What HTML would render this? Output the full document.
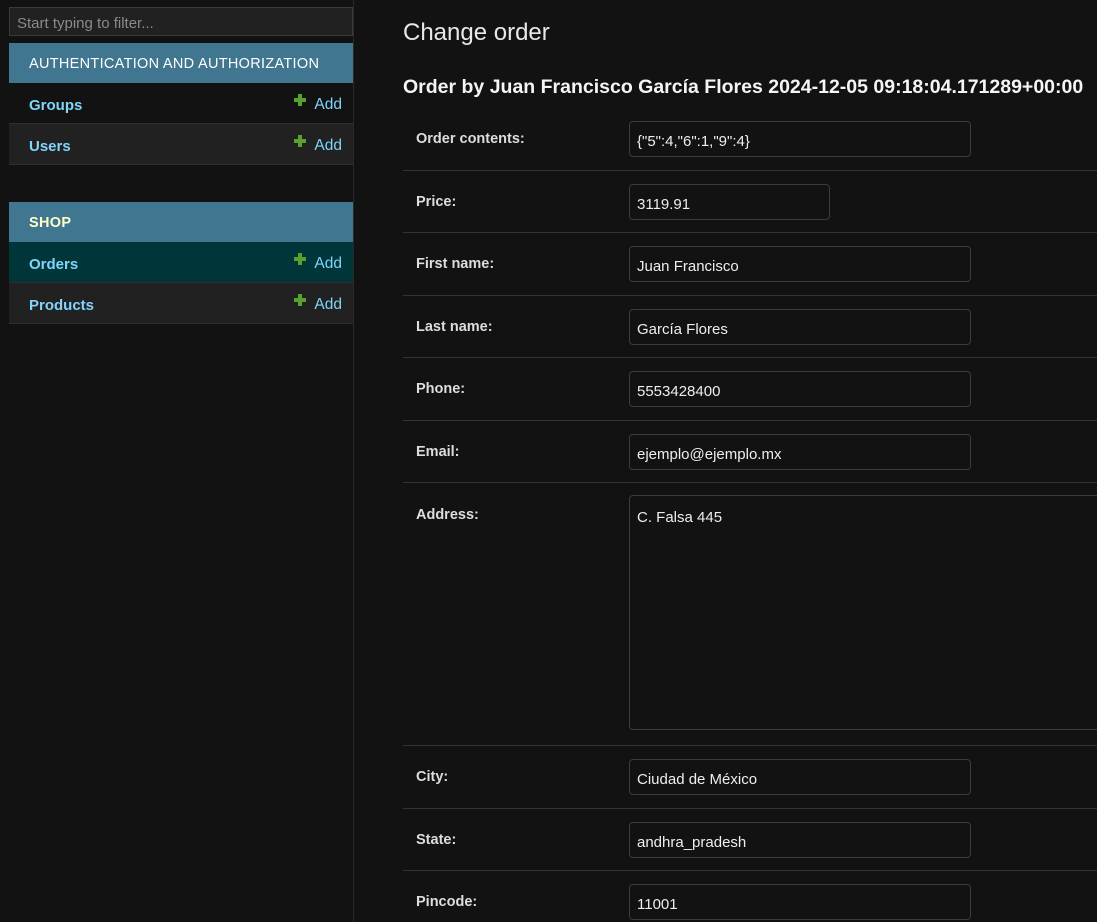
<!DOCTYPE html>
<html><head><meta charset="utf-8"><style>
*{box-sizing:border-box;margin:0;padding:0}
html,body{width:1097px;height:922px;overflow:hidden}
body{background:#121212;font-family:"Liberation Sans",sans-serif;color:#eee;position:relative}
#side{position:absolute;left:0;top:0;width:354px;height:922px;border-right:1px solid #2a2a2a;background:#121212}
.filter{position:absolute;left:9px;top:7px;width:344px;height:29px;border:1px solid #3a3a3a;background:#212121;color:#8a8a8a;font-size:15px;padding:7px 7px}
.cap{position:absolute;left:9px;width:344px;height:40px;background:#417690;color:#fff;font-size:14.5px;padding:13px 20px;letter-spacing:.3px}
.cap.b{font-weight:bold;color:#ffffcc}
.row{position:absolute;left:9px;width:344px;height:41px;border-bottom:1px solid #2e2e2e;font-size:15px;font-weight:bold;color:#81d4fa;padding:14px 20px}
.row .add{position:absolute;right:11px;top:13px;font-weight:normal;color:#81d4fa;font-size:15.5px}
.row .add i{position:absolute;left:-20px;top:-2px;width:12px;height:12px}
.row .add i:before{content:"";position:absolute;left:4px;top:0;width:4px;height:12px;background:#5aa02c}
.row .add i:after{content:"";position:absolute;left:0;top:4px;width:12px;height:4px;background:#5aa02c}
h1{position:absolute;left:403px;top:19px;font-size:24px;font-weight:300;color:#e8e8e8}
h2{position:absolute;left:403px;top:76px;font-size:19.5px;font-weight:bold;color:#f5f5f5;white-space:nowrap}
.f{position:absolute;left:403px;width:694px;border-bottom:1px solid #333}
.f label{position:absolute;left:13px;top:23px;font-size:14.5px;font-weight:bold;color:#ddd}
.f .in{position:absolute;left:226px;top:13px;width:342px;height:36px;border:1px solid #3c3c3c;border-radius:4px;background:#121212;font-size:15px;color:#eee;padding:11px 7px 0}
</style></head><body>
<div id="side">
<div class="filter">Start typing to filter...</div>
<div class="cap" style="top:43px">AUTHENTICATION AND AUTHORIZATION</div>
<div class="row" style="top:83px;background:#121212">Groups<span class="add"><i></i>Add</span></div>
<div class="row" style="top:124px;background:#212121">Users<span class="add"><i></i>Add</span></div>
<div class="cap b" style="top:202px">SHOP</div>
<div class="row" style="top:242px;background:#00363a">Orders<span class="add"><i></i>Add</span></div>
<div class="row" style="top:283px;background:#212121">Products<span class="add"><i></i>Add</span></div>
</div>
<h1>Change order</h1>
<h2>Order by Juan Francisco García Flores 2024-12-05 09:18:04.171289+00:00</h2>
<div class="f" style="top:108px;height:63px"><label>Order contents:</label><div class="in">{"5":4,"6":1,"9":4}</div></div>
<div class="f" style="top:171px;height:62px"><label>Price:</label><div class="in" style="width:201px">3119.91</div></div>
<div class="f" style="top:233px;height:63px"><label>First name:</label><div class="in">Juan Francisco</div></div>
<div class="f" style="top:296px;height:62px"><label>Last name:</label><div class="in">García Flores</div></div>
<div class="f" style="top:358px;height:63px"><label>Phone:</label><div class="in">5553428400</div></div>
<div class="f" style="top:421px;height:62px"><label>Email:</label><div class="in">ejemplo@ejemplo.mx</div></div>
<div class="f" style="top:483px;height:263px"><label style="top:24px">Address:</label><div class="in" style="top:12px;height:235px;width:480px;padding-top:13px">C. Falsa 445</div></div>
<div class="f" style="top:746px;height:63px"><label>City:</label><div class="in">Ciudad de México</div></div>
<div class="f" style="top:809px;height:62px"><label>State:</label><div class="in">andhra_pradesh</div></div>
<div class="f" style="top:871px;height:63px;border:0"><label>Pincode:</label><div class="in">11001</div></div>
</body></html>
